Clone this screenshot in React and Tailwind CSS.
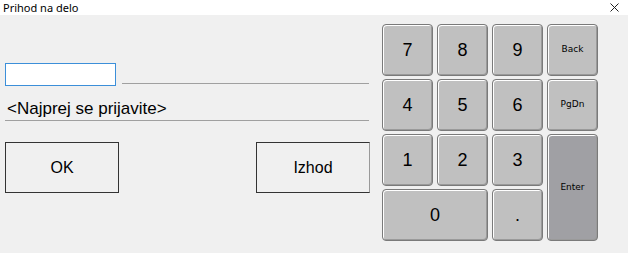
import React, { useState } from 'react';

const keyBase =
  'flex items-center justify-center rounded-[4px] border border-[#7a7a7a] text-black shadow-[inset_1px_1px_0_#ffffff,inset_-1px_-1px_0_#9a9a9a]';

const App = () => {
  const [value, setValue] = useState('');

  // tipke numericne tipkovnice
  const press = (k) => {
    if (k === 'Back') setValue((v) => v.slice(0, -1));
    else if (k === 'PgDn' || k === 'Enter') return;
    else setValue((v) => v + k);
  };

  const digit = (k, extra = '') => (
    <button
      key={k}
      onClick={() => press(k)}
      className={`${keyBase} bg-[#c0c0c0] text-[18px] ${extra}`}
    >
      {k}
    </button>
  );

  const small = (k, extra = '') => (
    <button
      key={k}
      onClick={() => press(k)}
      className={`${keyBase} text-[9px] ${extra}`}
      style={{ fontFamily: 'Tahoma, "DejaVu Sans", sans-serif' }}
    >
      {k}
    </button>
  );

  return (
    <div
      className="flex h-[253px] w-[628px] flex-col overflow-hidden bg-[#f0f0f0]"
      style={{ fontFamily: '"Liberation Sans", Arial, sans-serif' }}
    >
      {/* naslovna vrstica */}
      <div className="flex h-[15px] items-center justify-between bg-white pl-[3px] pr-[9px]">
        <span className="text-[11px] leading-none text-black" style={{ fontFamily: '"Noto Sans", sans-serif' }}>
          Prihod na delo
        </span>
        <svg width="9" height="9" viewBox="0 0 9 9" className="text-[#222]">
          <path d="M0.5 0.5 L8.5 8.5 M8.5 0.5 L0.5 8.5" stroke="currentColor" strokeWidth="1" />
        </svg>
      </div>

      <div className="flex">
        {/* leva stran */}
        <div className="flex w-[377px] flex-col pl-[5px]">
          <div className="mt-[48px] flex items-end">
            <input
              value={value}
              onChange={(e) => setValue(e.target.value)}
              className="h-[23px] w-[111px] border border-[#3c8fd9] bg-white px-[2px] text-[15px] outline-none"
            />
            <div className="mb-[2px] ml-[6px] h-px w-[247px] bg-[#a0a0a0]" />
          </div>
          <div className="mt-[14px] w-[364px] border-b border-[#a0a0a0] pb-[2px] pl-[2px] text-[17px] leading-[18px] text-black">
            &lt;Najprej se prijavite&gt;
          </div>
          <div className="mt-[21px] flex w-[365px] justify-between">
            <button className="h-[51px] w-[114px] border border-[#333] bg-[#f0f0f0] text-[16px] text-black">
              OK
            </button>
            <button className="h-[51px] w-[114px] border border-[#333] border-r-[#999] bg-[#f0f0f0] text-[16px] text-black">
              Izhod
            </button>
          </div>
        </div>

        {/* tipkovnica */}
        <div className="ml-[5px] mt-[9px] grid grid-cols-[51px_51px_51px_51px] grid-rows-[52px_52px_52px_52px] gap-x-[4px] gap-y-[3px]">
          {digit('7')}
          {digit('8')}
          {digit('9')}
          {small('Back', 'bg-[#c0c0c0]')}
          {digit('4')}
          {digit('5')}
          {digit('6')}
          {small('PgDn', 'bg-[#c0c0c0]')}
          {digit('1')}
          {digit('2')}
          {digit('3')}
          {small('Enter', 'row-span-2 bg-[#a0a0a4]')}
          {digit('0', 'col-span-2')}
          {digit('.')}
        </div>
      </div>
    </div>
  );
};

export default App;
